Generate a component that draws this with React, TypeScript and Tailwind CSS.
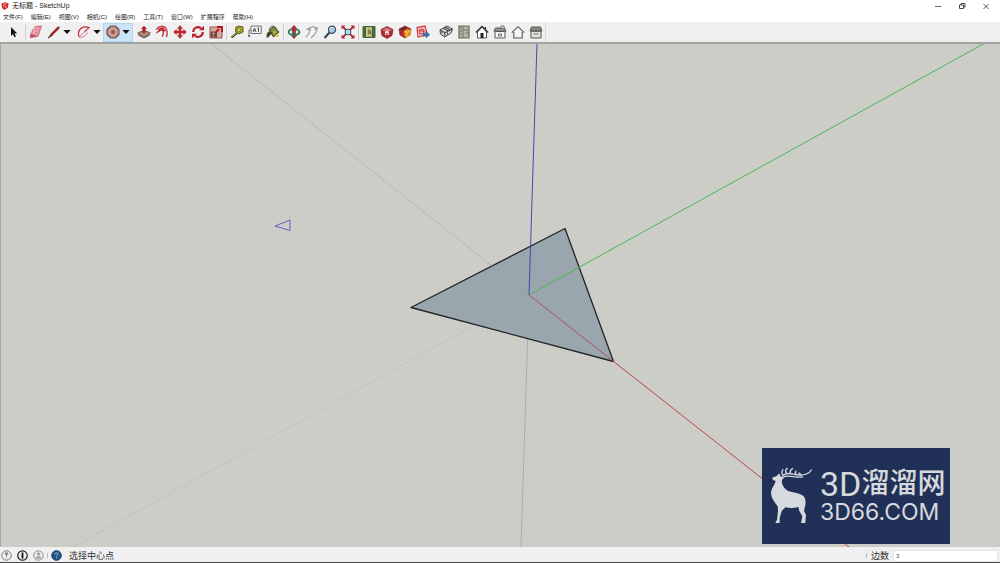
import type { ReactNode } from "react";

const menus = ["文件(F)", "编辑(E)", "视图(V)", "相机(C)", "绘图(R)", "工具(T)", "窗口(W)", "扩展程序", "帮助(H)"];

type ToolProps = { label: string; children: ReactNode };

function Tool({ label, children }: ToolProps) {
  return (
    <button type="button" aria-label={label} className="flex h-4 w-[18px] shrink-0 items-center justify-center">
      <svg viewBox="0 0 14 14" className="size-[14px]" fill="none" aria-hidden="true">
        {children}
      </svg>
    </button>
  );
}

function Caret({ label }: { label: string }) {
  return (
    <button type="button" aria-label={label} className="flex h-4 w-2 shrink-0 items-center justify-center">
      <svg viewBox="0 0 8 4" className="h-1 w-2" aria-hidden="true">
        <path d="M.3 0h7.4L4 4z" fill="#111" />
      </svg>
    </button>
  );
}

function Separator() {
  return (
    <span className="flex w-[3px] shrink-0 justify-center">
      <span className="h-4 w-px bg-[#cfcfcf]" />
    </span>
  );
}

function TitleBar() {
  return (
    <header className="flex h-3 shrink-0 items-center bg-white pl-px">
      <svg viewBox="0 0 8 8" className="size-2 shrink-0" aria-hidden="true">
        <path d="M.5 1.5 4 .2l3.5 1L7 5.5 3.6 8 1 6z" fill="#d3252b" />
        <path d="M2 2.2 5.8 1.8M2 3.8l3 .4-.5 1.8" stroke="#f8c6c6" strokeWidth=".7" fill="none" />
      </svg>
      <h1 className="ml-[3px] flex-1 whitespace-nowrap text-[7px] leading-3 text-[#222]">无标题 - SketchUp</h1>
      <div className="flex items-center gap-4 pr-2.5">
        <button type="button" aria-label="最小化" className="flex size-2 items-center justify-center">
          <svg viewBox="0 0 8 8" className="size-2">
            <path d="M1 4.5h6" stroke="#555" strokeWidth=".9" />
          </svg>
        </button>
        <button type="button" aria-label="还原" className="flex size-2 items-center justify-center">
          <svg viewBox="0 0 8 8" className="size-2" fill="none" stroke="#333" strokeWidth=".9">
            <path d="M1.5 3h4v3.5h-4zM3 3V1.5h4V5H5.5" />
          </svg>
        </button>
        <button type="button" aria-label="关闭" className="flex size-2 items-center justify-center">
          <svg viewBox="0 0 8 8" className="size-2">
            <path d="m1.5 2 5 5m0-5-5 5" stroke="#444" strokeWidth=".9" />
          </svg>
        </button>
      </div>
    </header>
  );
}

function MenuBar() {
  return (
    <nav className="flex h-2.5 shrink-0 items-center gap-2 bg-white pl-[3px]">
      {menus.map((menu) => (
        <button key={menu} type="button" className="whitespace-nowrap text-[6px] leading-[10px] text-[#222]">
          {menu}
        </button>
      ))}
    </nav>
  );
}

function Toolbar() {
  return (
    <div className="flex h-5 shrink-0 items-center bg-[#f0f0f0] pl-1" role="toolbar" aria-label="工具栏">
      <Tool label="选择">
        <path d="M5 2v9l2-2 1.4 3.2 1.5-.7L8.5 8.4h2.7z" fill="#111" />
      </Tool>
      <span className="w-0.5" />
      <Separator />
      <Tool label="橡皮擦">
        <path d="M6 1.5 12.5 1 9 11.5 1.3 12.5 1.5 9z" fill="#e78b9b" stroke="#b25767" strokeWidth=".7" />
        <path d="M6 1.5 4.7 9.2 9 11.5M4.7 9.2 1.5 9M8 3l2 1M7 6l2 1" stroke="#f9d1d5" strokeWidth=".9" />
        <path d="m1.5 9 3.2.2L9 11.5l-7.7 1z" fill="#c44f64" />
      </Tool>
      <Tool label="直线">
        <path d="m2 12 2.2-3.5 7-7 1.4 1.5-7.1 7z" fill="#b41422" stroke="#762227" strokeWidth=".5" />
        <path d="m1 13 4.6-3" stroke="#222" />
      </Tool>
      <Caret label="直线选项" />
      <span className="w-1" />
      <Tool label="圆弧">
        <path d="M2 11.5C-.2 5 5 .2 12 2.6L7.5 7" stroke="#c92633" strokeWidth="1.2" />
        <path d="M2 12 12.3 3M2 12.3c4 .4 7-1.3 8.6-4.8" stroke="#ca7078" strokeWidth=".9" />
      </Tool>
      <Caret label="圆弧选项" />
      <span className="w-0.5" />
      <div className="flex h-[19px] w-[30px] items-center border border-[#b3d6f2] bg-[#cce4f7]">
        <Tool label="多边形">
          <path d="M4.5 1h5L13 4.5v5L9.5 13h-5L1 9.5v-5z" fill="#b48b83" stroke="#79514e" strokeWidth="1.2" />
          <circle cx="7" cy="7" r="3.6" stroke="#d5b5aa" />
          <circle cx="7" cy="7" r="1.5" fill="#a23b3b" />
        </Tool>
        <Caret label="多边形选项" />
      </div>
      <span className="w-0.5" />
      <Tool label="推拉">
        <path d="m.7 8 6.3-3 6.4 3L7 12.5z" fill="#a78b74" stroke="#654d41" strokeWidth=".8" />
        <path d="M1 9v1.3l6 3.2 6-3.2V9l-6 3.5z" fill="#5e514b" />
        <path d="M7 .7 10 4H8.3v4H5.7V4H4z" fill="#bb1725" />
      </Tool>
      <Tool label="偏移">
        <path d="M1 4.5C6-.3 11 .5 12 6.5c.4 2.5-.2 4-.6 5.7" stroke="#b94652" strokeWidth="1.5" />
        <path d="M1.5 8C5 4 8.4 4 8.3 7.2c0 2-.5 3-1 4.5" stroke="#ae303c" strokeWidth="1.3" />
        <path d="m3 4 5-2 3 4-3 1-1-2-3 2z" fill="#cf2530" />
      </Tool>
      <Tool label="移动">
        <path d="m7 .4 2.5 3H8.1v2.5h2.5V4.5l3 2.5-3 2.5V8.1H8.1v2.5h1.4L7 13.6l-2.5-3h1.4V8.1H3.4v1.4L.4 7l3-2.5v1.4h2.5V3.4H4.5z" fill="#c32831" stroke="#a21822" strokeWidth=".4" />
      </Tool>
      <Tool label="旋转">
        <path d="M2.2 7A4.8 4.8 0 0 1 10 3.2M11.8 7A4.8 4.8 0 0 1 4 10.8" stroke="#bd202b" strokeWidth="2.2" />
        <path d="M8 5.3h5V.8zM6 8.7H1v4.5z" fill="#bd202b" />
      </Tool>
      <Tool label="缩放">
        <path d="M1 2h12v11H1z" fill="#d5aaa0" stroke="#9a504b" />
        <path d="M1.5 6.5H8v6H1.5z" fill="#77453e" />
        <path d="m7 7 3-3m-2-2h5v5" stroke="#b71828" strokeWidth="2" />
        <path d="M3 8.5h3M4.5 7v5" stroke="#d3a599" strokeWidth=".7" />
      </Tool>
      <Separator />
      <Tool label="卷尺工具">
        <path d="m6 2 3-1 4 1v5L9 9 5.5 7z" fill="#a8a529" stroke="#4f5122" strokeWidth=".9" />
        <circle cx="9" cy="4.8" r="1.7" fill="#ded76b" stroke="#6f6b22" strokeWidth=".6" />
        <path d="m7 8-5.5 4.5" stroke="#333" strokeWidth="2" />
        <path d="m6.5 8-5 4" stroke="#d8ce42" strokeWidth=".8" />
      </Tool>
      <Tool label="文字">
        <path d="M3 1h10.3v7.5H3zM1 12V5h2M1 12l-1-2m1 2 1-2" stroke="#555" strokeWidth=".8" />
        <path d="M5 7 6.5 3 8 7M5.5 5.6h2M10.5 2.8V7M9.5 3.5l1-.7" stroke="#333" strokeWidth=".8" />
      </Tool>
      <Tool label="材质">
        <path d="m3 5 5-3.5L13 7l-5.5 5z" fill="#898b38" stroke="#41462c" />
        <path d="M3 6.5C.5 7.7.4 10 .8 13 3 12.5 5 9 7 7z" fill="#45452c" />
        <path d="M4 5C3-.2 10-.2 10.5 5" stroke="#555" />
        <path d="m7 6 3 1-2 2zM10.5 9c2 0 2.7 1 2 3.2L9 11.5z" fill="#d5c64a" />
      </Tool>
      <Separator />
      <Tool label="环绕观察">
        <ellipse cx="7" cy="7" rx="5.3" ry="3" stroke="#318062" strokeWidth="2" />
        <path d="M4.6 3.2 7 .3l2.4 2.9H8.6v7.6h.8L7 13.7l-2.4-2.9h.8V3.2z" fill="#b82e38" stroke="#a32630" strokeWidth=".6" />
        <path d="M8 10c2 0 4-1 5-2.8M7 7.5l-3 2.3 3 2.4z" stroke="#28775a" fill="#28775a" strokeWidth=".8" />
      </Tool>
      <Tool label="平移">
        <path d="M1 12c1-1.5 2.8-2.2 3-4L5.5 4 3 4.7C2 5 2 3.8 3 3.4L8 1.6l4 1.2c1 .4.6 1.4-.5 1.2L10 3.8l1.6 2.3-1.8 3L6 13" fill="#f5f5f5" stroke="#999" strokeWidth="1.1" />
      </Tool>
      <Tool label="缩放视图">
        <path d="M6.5 7.5 1.5 13" stroke="#353f47" strokeWidth="2" />
        <circle cx="9" cy="4.7" r="3.6" fill="#a8cce8" stroke="#3b5167" strokeWidth="1.2" />
        <path d="M7 4c.5-1.2 1.6-1.7 2.8-1.5" stroke="#edf8ff" />
      </Tool>
      <Tool label="充满视窗">
        <path d="m2 2 10 10m0-10L2 12" stroke="#b92b35" strokeWidth="1.8" />
        <path d="M.5.5h4l-4 4zM9.5.5h4v4zM.5 9.5v4h4zM13.5 9.5v4h-4z" fill="#b92b35" />
        <circle cx="7" cy="7" r="3" fill="#b7d5e5" stroke="#36566a" />
      </Tool>
      <Separator />
      <Tool label="添加位置">
        <path d="M1 1.5h12v11H1z" fill="#adab67" stroke="#4b633d" />
        <path d="M1 2h3v10H1zM10 2h3v10h-3z" fill="#426c3c" />
        <path d="M5 2v10M8 2l1 4-2 5" stroke="#e3ddac" />
        <path d="M6 5h3v4H6z" fill="#7b8049" />
      </Tool>
      <Tool label="获取模型">
        <path d="m1 4.5 6-3 6 3-1 6-5 3-5.2-3z" fill="#b62632" stroke="#792b30" strokeWidth=".7" />
        <path d="m2 5 5-2.5L12 5 7 7.5z" fill="#d97575" />
        <path d="m5 7 2-1.7L9 7v3H5z" fill="#f4dddd" />
        <path d="M6.3 8h1.4v2H6.3z" fill="#92404a" />
      </Tool>
      <Tool label="扩展程序库">
        <path d="m1 4 6-3 6 3-1 6-5 3-5-3z" fill="#ba2630" stroke="#7b232a" strokeWidth=".7" />
        <path d="m6 6 3-2 4 1-.4 5L8 13 6 10z" fill="#e09225" />
        <path d="m6.5 6 3 1.2L13 5.3M9.3 7.2 8.4 12" stroke="#ffd557" strokeWidth=".8" />
        <path d="m2 4 5-2 2 1-5 3z" fill="#5c2929" />
      </Tool>
      <Tool label="发送到 LayOut">
        <path d="M1 2.5 9 1l2.5 9L2 12z" fill="#f2c3c4" stroke="#d54a51" strokeWidth="1.3" />
        <path d="m3 5 4-1 1 4-4 1zM4 6h5" stroke="#cf3943" />
        <path d="M7 8.2h3V6.5l3.8 3.2L10 13v-2H7z" fill="#3971af" stroke="#255288" strokeWidth=".4" />
      </Tool>
      <span className="w-[5px]" />
      <Tool label="等轴视图">
        <path d="m1 5 7-4 5.5 3L12 8l-6.5 4L1.5 9z" fill="#ddd" stroke="#444" />
        <path d="m1 5 5 2.7L13.5 4M5.8 7.5v4M4 3.2l5 2.5M6 2l5 3M3 7v1.5M8.5 7.5v2" stroke="#444" strokeWidth="1.1" />
      </Tool>
      <Tool label="俯视图">
        <path d="M2 1h10v12H2z" fill="#b5b5aa" stroke="#66665e" strokeWidth="1.2" />
        <path d="M6 1v12M6 5h6M8.5 8H12M3 3h2m-2 3h2M3 9h2" stroke="#77776e" />
      </Tool>
      <Tool label="前视图">
        <path d="M2.5 7v6h9V7L7 2z" fill="#fff" stroke="#555" />
        <path d="m.8 7.5 6.2-6 6.2 6M10.5 2v3" stroke="#333" strokeWidth="1.3" />
        <path d="M5.5 8h3v5h-3z" fill="#222" />
      </Tool>
      <Tool label="右视图">
        <path d="M2 6.5h10V13H2z" fill="#f5f5f0" stroke="#555" />
        <path d="M1 6.2 2.5 3h9L13 6.2z" fill="#99998e" stroke="#555" />
        <path d="M8 3V1h3v2M5.5 9h3v2h-3z" fill="#eee" stroke="#555" strokeWidth=".8" />
      </Tool>
      <Tool label="后视图">
        <path d="M2.8 7v6h8.4V7M.8 7.6 7 1.7l6.2 5.9" fill="#f5f5f5" stroke="#555" strokeWidth="1.1" />
      </Tool>
      <Tool label="左视图">
        <path d="M2 6.2h10V13H2z" fill="#e2e2da" stroke="#555" />
        <path d="M1 6 2.5 2h9L13 6z" fill="#88887d" stroke="#555" />
        <path d="M4.5 9h5" stroke="#777" />
      </Tool>
      <span className="h-5 w-px bg-[#dcdcdc]" />
    </div>
  );
}

function Watermark() {
  return (
    <div className="absolute right-[50px] bottom-[3px] flex h-24 w-[188px] items-center bg-[#213056] pl-[3px] text-[#d6d9dd]">
      <svg viewBox="0 0 156 198" className="mb-1 h-[66px] w-[52px] shrink-0" aria-hidden="true">
        <path
          d="M21 50 35 45 42 37 48 47 60 46 51 57C48 68 58 84 70 90C84 95 100 96 111 102C121 108 123 120 121 132L117 150 123 162 121 186H108L112 166 103 150 100 138C88 142 72 142 62 138L50 150 44 172V186H31L36 176 39 150 38 136C26 120 15 106 19 89C22 78 31 68 32 60L24 57Z"
          fill="currentColor"
        />
        <path
          d="M53 44C68 30 84 42 100 42C118 43 132 38 139 27M54 42C48 36 50 31 54 26M64 37C60 31 62 26 67 22M77 37C74 31 77 26 83 23M95 42C90 38 91 33 93 30M109 43 102 36M58 47C74 42 88 50 112 48"
          fill="none"
          stroke="currentColor"
          strokeWidth="4"
          strokeLinecap="round"
        />
      </svg>
      <div className="ml-[3px] whitespace-nowrap">
        <div className="flex h-8 items-center">
          <span className="font-[Roboto,sans-serif] text-[34px] leading-8">3D</span>
          <span className="text-[28px] leading-8 font-medium">溜溜网</span>
        </div>
        <div className="font-[Inter,sans-serif] text-[23px] leading-6">3D66.COM</div>
      </div>
    </div>
  );
}

function Viewport() {
  return (
    <main className="relative min-h-0 flex-1 overflow-hidden border-t-2 border-[#a2a2a0] bg-[#cdcdc8]">
      <svg viewBox="0 44 1000 503" preserveAspectRatio="xMidYMid slice" className="block size-full" fill="none" role="img" aria-label="三角形与坐标轴">
        <path d="M210 43 529 295" stroke="#bcb3ae" strokeWidth=".8" />
        <path d="M73 547 529 295" stroke="#b4c5b6" strokeWidth=".8" />
        <path d="M521 547 529 295" stroke="#a8a8b5" strokeWidth=".9" />
        <path d="M411 307.5 565 228.5 613.5 361.5Z" fill="#9aa6ad" stroke="#202326" strokeWidth="1.3" strokeLinejoin="round" />
        <path d="m487 262 42 33M487 318l42-23" stroke="#929fa5" strokeWidth=".6" />
        <path d="M529 295 537 43" stroke="#4747ad" />
        <path d="M529 295 985 43" stroke="#4eb455" />
        <path d="m529 295 84 66" stroke="#a75565" />
        <path d="m613 361 236 186" stroke="#bc4650" />
        <path d="m275 226 15-6v10.5z" stroke="#675fbe" />
        <path d="M.5 44v503" stroke="#aaa" />
      </svg>
      <Watermark />
    </main>
  );
}

function StatusBar() {
  return (
    <footer className="flex h-4 shrink-0 items-center border-b border-[#4a4a4c] bg-[#f0f0f0] pt-0.5 text-[#333]">
      <div className="flex items-center gap-[5px] pl-px">
        <button type="button" aria-label="地理位置" className="size-[11px]">
          <svg viewBox="0 0 11 11" fill="none">
            <circle cx="5.5" cy="5.5" r="4.7" stroke="#777" />
            <path d="M5.5 8.5V5M4 3.5C4 2 7 2 7 3.5S5.5 5.5 5.5 5.5 4 4.5 4 3.5z" fill="#888" stroke="#888" strokeWidth=".6" />
          </svg>
        </button>
        <button type="button" aria-label="归属信息" className="size-[11px]">
          <svg viewBox="0 0 11 11" fill="none">
            <circle cx="5.5" cy="5.5" r="4.7" stroke="#222" strokeWidth="1.2" />
            <path d="M5.5 2.5v6" stroke="#111" strokeWidth="1.8" />
          </svg>
        </button>
        <button type="button" aria-label="登录" className="size-[11px]">
          <svg viewBox="0 0 11 11" fill="none">
            <circle cx="5.5" cy="5.5" r="4.7" stroke="#888" />
            <circle cx="5.5" cy="4" r="1.6" fill="#999" />
            <path d="M2.5 8.5c.5-3 5.5-3 6 0z" fill="#999" />
          </svg>
        </button>
      </div>
      <span className="mx-[3px] h-[5px] w-px bg-[#bbb]" />
      <button type="button" aria-label="帮助" className="size-[11px]">
        <svg viewBox="0 0 11 11" fill="none">
          <circle cx="5.5" cy="5.5" r="4.8" fill="#275487" stroke="#173d6a" />
          <path d="M3.8 4.2c.2-2 3.4-1.7 3.2 0C7 5.1 5.5 5 5.5 6.5M5.5 7.5v1" stroke="#a6c2df" strokeWidth=".9" />
        </svg>
      </button>
      <p className="ml-[7px] flex-1 text-[9px] leading-3">选择中心点</p>
      <span className="mr-1 h-[5px] w-px bg-[#bbb]" />
      <label htmlFor="sides" className="text-[9px] leading-3">边数</label>
      <input id="sides" type="text" defaultValue="3" className="mr-0.5 ml-1 h-3 w-[105px] border border-[#e4e4e4] bg-white pl-0.5 text-[6px] leading-[10px] text-[#444] outline-none" />
    </footer>
  );
}

export default function App() {
  return (
    <div className="flex h-screen flex-col overflow-hidden bg-[#f0f0f0] font-['Liberation_Sans','Noto_Sans_CJK_SC',sans-serif]">
      <TitleBar />
      <MenuBar />
      <Toolbar />
      <Viewport />
      <StatusBar />
    </div>
  );
}
